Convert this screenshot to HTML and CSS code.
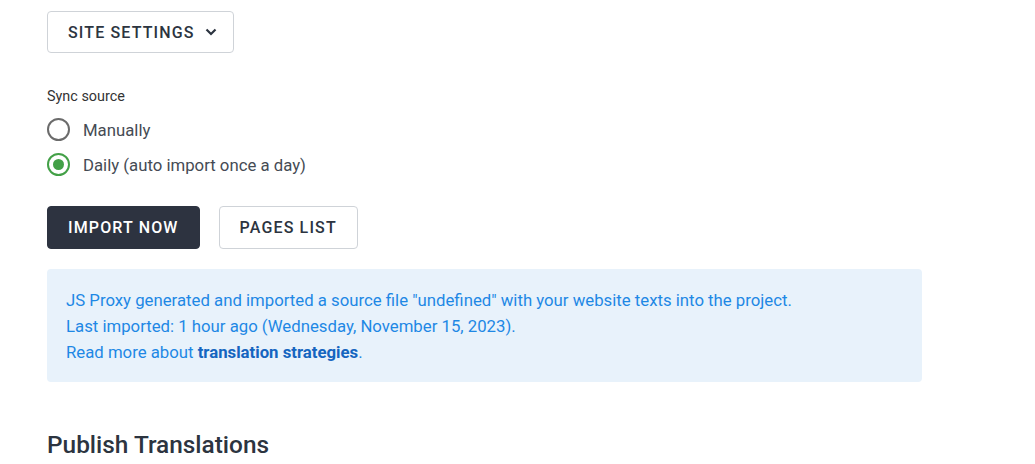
FILE: index.html
```html
<!DOCTYPE html>
<html lang="en">
  <head>
    <meta charset="UTF-8" />
    <meta name="viewport" content="width=device-width, initial-scale=1.0" />
    <title>Source Settings</title>
    <link rel="stylesheet" href="styles.css">
  </head>
  <body>
    <div class="page">
      <button class="btn btn-outline dropdown" type="button">
        Site settings
        <svg width="14" height="14" viewBox="0 0 14 14" aria-hidden="true">
          <path d="M2.5 4.5l4.5 4.5 4.5-4.5" fill="none" stroke="currentColor" stroke-width="2.2" />
        </svg>
      </button>

      <div class="field">
        <div class="field-label">Sync source</div>
        <label class="radio">
          <input type="radio" name="sync" value="manual" />
          <span class="radio-mark"></span>
          Manually
        </label>
        <label class="radio">
          <input type="radio" name="sync" value="daily" checked />
          <span class="radio-mark"></span>
          Daily (auto import once a day)
        </label>
      </div>

      <div class="actions">
        <button class="btn btn-dark" type="button">Import now</button>
        <button class="btn btn-outline" type="button">Pages list</button>
      </div>

      <div class="alert">
        JS Proxy generated and imported a source file "undefined" with your website texts into the project.<br />
        Last imported: 1 hour ago (Wednesday, November 15, 2023).<br />
        Read more about <a href="#">translation strategies</a>.
      </div>

      <h2>Publish Translations</h2>
    </div>
  </body>
</html>
```

FILE: styles.css
```css
* {
  margin: 0;
  padding: 0;
  box-sizing: border-box;
  font-family: Roboto, "Liberation Sans", sans-serif;
}

body {
  background: #fff;
  color: #2c3440;
}

.page {
  padding: 11px 47px 0;
  width: 875px;
  box-sizing: content-box;
}

.btn {
  display: inline-flex;
  align-items: center;
  height: 43px;
  padding: 0 20px;
  border-radius: 4px;
  font-size: 16px;
  font-weight: 500;
  letter-spacing: 1.15px;
  text-transform: uppercase;
  cursor: pointer;
}

.btn-outline {
  background: #fff;
  color: #2c3440;
  border: 1px solid #cfd3d8;
}

.btn-dark {
  background: #2d3340;
  color: #fff;
  border: 1px solid #2d3340;
}

.dropdown {
  height: 42px;
  gap: 9px;
  padding-right: 15px;
}

.field {
  margin-top: 35px;
}

.field-label {
  font-size: 14.4px;
  color: #333;
  line-height: 18px;
  margin-bottom: 6px;
}

.radio {
  display: flex;
  align-items: center;
  gap: 13px;
  height: 35px;
  font-size: 16.75px;
  color: #454b54;
  cursor: pointer;
}

.radio input {
  display: none;
}

.radio-mark {
  width: 23px;
  height: 23px;
  border: 2px solid #6b6b6b;
  border-radius: 50%;
  display: flex;
  align-items: center;
  justify-content: center;
}

.radio input:checked + .radio-mark {
  border-color: #43a047;
}

.radio input:checked + .radio-mark::after {
  content: "";
  width: 11px;
  height: 11px;
  border-radius: 50%;
  background: #43a047;
}

.actions {
  display: flex;
  gap: 19px;
  margin-top: 24px;
}

.alert {
  margin-top: 20px;
  background: #e8f2fb;
  color: #1e88e5;
  border-radius: 4px;
  padding: 18px 19px 17px;
  font-size: 16.75px;
  line-height: 26px;
}

.alert a {
  color: #1565c0;
  font-weight: 700;
  text-decoration: none;
}

h2 {
  margin-top: 48px;
  font-size: 24.4px;
  font-weight: 500;
  color: #2c3440;
}
```
